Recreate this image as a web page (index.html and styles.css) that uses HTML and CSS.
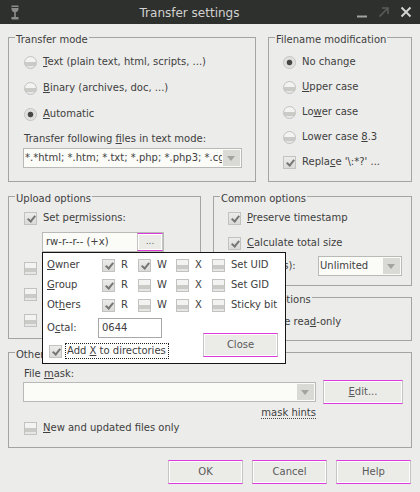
FILE: index.html
```html
<!DOCTYPE html>
<html>
<head>
<meta charset="utf-8">
<title>Transfer settings</title>
<link rel="stylesheet" href="styles.css">
</head>
<body>
<div class="window">
  <header class="titlebar">
    <svg class="app-icon" width="10" height="17" viewBox="0 0 10 17">
      <path d="M1.5 1.5h7v3.5c0 2-1.6 3.3-3.5 3.3S1.5 7 1.5 5z" fill="#8c8c8a"/>
      <path d="M1.5 3.5h7" stroke="#2e302d" stroke-width="1"/>
      <rect x="4.2" y="8" width="1.6" height="5" fill="#8c8c8a"/>
      <rect x="1.5" y="13" width="7" height="2.5" fill="#8c8c8a"/>
    </svg>
    <div class="title">Transfer settings</div>
    <div class="wm">
      <svg width="12" height="12" viewBox="0 0 12 12"><path d="M1 10.5h10" stroke="#a3a3a1" stroke-width="2"/></svg>
      <svg width="12" height="12" viewBox="0 0 12 12"><path d="M1.5 10.5L10 2M4 2h6v6" stroke="#5a5b59" stroke-width="1.6" fill="none"/></svg>
      <svg width="12" height="12" viewBox="0 0 12 12"><path d="M1.5 1.5l9 9M10.5 1.5l-9 9" stroke="#d4d4d2" stroke-width="2"/></svg>
    </div>
  </header>

  <main class="content">
    <div class="row-top">
      <section class="group g-transfer">
        <span class="gtitle">Transfer mode</span>
        <label class="opt mt6"><span class="rb"></span><span><u>T</u>ext (plain text, html, scripts, ...)</span></label>
        <label class="opt mt6"><span class="rb"></span><span><u>B</u>inary (archives, doc, ...)</span></label>
        <label class="opt mt6"><span class="rb on"></span><span><u>A</u>utomatic</span></label>
        <div class="lbl tf-label">Transfer following <u>f</u>iles in text mode:</div>
        <div class="combo tf-combo"><span class="ctext">*.*html; *.htm; *.txt; *.php; *.php3; *.cgi; *.c; *.cpp</span><span class="cbtn"></span></div>
      </section>
      <section class="group g-filename">
        <span class="gtitle">Filename modification</span>
        <label class="opt mt6"><span class="rb on"></span><span>No chan<u>g</u>e</span></label>
        <label class="opt mt5"><span class="rb"></span><span><u>U</u>pper case</span></label>
        <label class="opt mt5"><span class="rb"></span><span>Lo<u>w</u>er case</span></label>
        <label class="opt mt5"><span class="rb"></span><span>Lower case <u>8</u>.3</span></label>
        <label class="opt mt5"><span class="cb on"></span><span>Repla<u>c</u>e '\:*?' ...</span></label>
      </section>
    </div>

    <div class="row-mid">
      <section class="group g-upload">
        <span class="gtitle">Upload options</span>
        <label class="opt mt3"><span class="cb on"></span><span>Set pe<u>r</u>missions:</span></label>
        <div class="perm-edit"><span class="ptext">rw-r--r-- (+x)</span><span class="btn dots">...</span></div>
        <label class="opt mt6"><span class="cb"></span><span>Clear 'Archive' attribute</span></label>
        <label class="opt mt6"><span class="cb"></span><span>Remove BOM and EOF marks</span></label>
        <label class="opt mt6"><span class="cb"></span><span>Encrypt new files</span></label>
      </section>
      <div class="right-col">
        <section class="group g-common">
          <span class="gtitle">Common options</span>
          <label class="opt mt3"><span class="cb on"></span><span><u>P</u>reserve timestamp</span></label>
          <label class="opt mt5"><span class="cb on"></span><span><u>C</u>alculate total size</span></label>
          <div class="speed-row">
            <span class="lbl">Speed (KB/s):</span>
            <div class="combo speed-combo"><span class="ctext">Unlimited</span><span class="cbtn"></span></div>
          </div>
        </section>
        <section class="group g-download">
          <span class="gtitle">Download options</span>
          <label class="opt mt6"><span class="cb"></span><span>Preserve rea<u>d</u>-only</span></label>
        </section>
      </div>
    </div>

    <section class="group g-other">
      <span class="gtitle">Other</span>
      <div class="lbl mask-label">File <u>m</u>ask:</div>
      <div class="mask-row">
        <div class="combo mask-combo"><span class="ctext"></span><span class="cbtn"></span></div>
        <span class="btn edit-btn"><u>E</u>dit...</span>
      </div>
      <div class="hints-row"><span class="hints">mask hints</span></div>
      <label class="opt new-row"><span class="cb"></span><span><u>N</u>ew and updated files only</span></label>
    </section>

    <div class="buttons">
      <span class="btn dlg-btn">OK</span>
      <span class="btn dlg-btn">Cancel</span>
      <span class="btn dlg-btn">Help</span>
    </div>
  </main>

  <div class="popup">
    <div class="perm-grid">
      <span class="plabel"><u>O</u>wner</span>
      <span class="pcell"><span class="cb on"></span>R</span>
      <span class="pcell"><span class="cb on"></span>W</span>
      <span class="pcell"><span class="cb"></span>X</span>
      <span class="pcell"><span class="cb"></span>Set UID</span>

      <span class="plabel"><u>G</u>roup</span>
      <span class="pcell"><span class="cb on"></span>R</span>
      <span class="pcell"><span class="cb"></span>W</span>
      <span class="pcell"><span class="cb"></span>X</span>
      <span class="pcell"><span class="cb"></span>Set GID</span>

      <span class="plabel">Ot<u>h</u>ers</span>
      <span class="pcell"><span class="cb on"></span>R</span>
      <span class="pcell"><span class="cb"></span>W</span>
      <span class="pcell"><span class="cb"></span>X</span>
      <span class="pcell"><span class="cb"></span>Sticky bit</span>
    </div>
    <div class="popup-bottom">
      <div class="pb-left">
        <div class="octal-row"><span class="plabel">O<u>c</u>tal:</span><span class="octal-edit">0644</span></div>
        <label class="addx-row"><span class="cb on"></span><span class="focus">Add <u>X</u> to directories</span></label>
      </div>
      <span class="btn close-btn">Close</span>
    </div>
  </div>
</div>
</body>
</html>
```

FILE: styles.css
```css
* { box-sizing: border-box; }
html, body { margin: 0; padding: 0; }
body {
  width: 420px;
  height: 492px;
  overflow: hidden;
  background: #ececea;
  font-family: "DejaVu Sans", sans-serif;
  font-size: 10px;
  line-height: 12px;
  color: #404040;
}
u { text-decoration: underline; text-underline-offset: 1px; }

.window { position: relative; width: 420px; height: 492px; }

/* title bar */
.titlebar {
  height: 24px;
  background: #2e302d;
  display: flex;
  align-items: center;
}
.app-icon { margin-left: 10px; flex: none; }
.title {
  flex: 1;
  text-align: center;
  font-size: 12px;
  color: #d2d2d0;
  padding-top: 1px;
  padding-left: 3px;
}
.wm { display: flex; align-items: center; gap: 10px; padding-right: 8px; }
.wm svg { display: block; }

/* content */
.content { padding: 13px 8px 0 8px; }

.group {
  border: 1px solid #a4a4a2;
  display: flex;
  flex-direction: column;
  align-items: flex-start;
}
.gtitle {
  margin: -4px 0 0 6px;
  padding: 0 1px;
  background: #ececea;
  height: 12px;
  line-height: 12px;
  white-space: nowrap;
}

.opt {
  display: flex;
  align-items: center;
  gap: 6px;
  height: 20px;
  white-space: nowrap;
}
.mt3 { margin-top: 3px; }
.mt5 { margin-top: 5px; }
.mt6 { margin-top: 6px; }

.lbl { white-space: nowrap; }

/* radio & checkbox */
.rb, .cb {
  flex: none;
  width: 13px;
  height: 13px;
  border: 1px solid #c2c2c0;
  background: linear-gradient(#f3f3f1 0 45%, #cacac7 45% 78%, #e6e6e4 78%);
  position: relative;
}
.rb { border-radius: 50%; }
.rb.on {
  background: radial-gradient(circle at 50% 50%, #474747 0 2.4px, #dcdcda 3.2px, #eeeeec 100%);
}
.cb.on { background: linear-gradient(#ececea, #dadad8); }
.cb.on::after {
  content: "";
  position: absolute;
  left: 4px;
  top: 1px;
  width: 3px;
  height: 6px;
  border-right: 2px solid #767674;
  border-bottom: 2px solid #767674;
  transform: rotate(40deg);
}

/* combos */
.combo {
  display: flex;
  height: 20px;
  border: 1px solid #b9b9b7;
  background: #fbfbf8;
  overflow: hidden;
}
.ctext {
  flex: 1;
  overflow: hidden;
  white-space: nowrap;
  padding: 3px 0 0 1px;
  min-width: 0;
}
.cbtn {
  flex: none;
  width: 17px;
  margin: 1px;
  background: #d9d9d6;
  position: relative;
}
.cbtn::after {
  content: "";
  position: absolute;
  left: 4px;
  top: 6px;
  border-left: 4.5px solid transparent;
  border-right: 4.5px solid transparent;
  border-top: 5px solid #a2a2a0;
}

/* buttons */
.btn {
  display: flex;
  align-items: center;
  justify-content: center;
  background: #ebebe8;
  border: 1px solid #c4c4c2;
  border-top-color: #dd3add;
  border-bottom-color: #dd3add;
  box-shadow: inset 0 0 0 1px #ffffff;
  color: #5a5a5a;
  white-space: nowrap;
}

/* top row */
.row-top {
  display: grid;
  grid-template-columns: 248px 144px;
  column-gap: 12px;
}
.g-transfer { height: 145px; padding-left: 15px; }
.g-transfer .gtitle { margin-left: -9px; }
.tf-label { margin-top: 9px; }
.tf-combo { margin-top: 3px; margin-left: -1px; width: 219px; }
.g-filename { height: 145px; padding-left: 14px; }
.g-filename .gtitle { margin-left: -8px; }

/* middle row */
.row-mid {
  margin-top: 14px;
  display: grid;
  grid-template-columns: 193px 199px;
  column-gap: 12px;
}
.g-upload { height: 143px; padding-left: 15px; }
.g-upload .gtitle { margin-left: -9px; }
.perm-edit {
  margin: 4px 0 0 18px;
  width: 122px;
  height: 20px;
  border: 1px solid #b9b9b7;
  background: #fbfbf8;
  display: flex;
}
.ptext { flex: 1; padding: 3px 0 0 3px; }
.dots { width: 26px; height: 18px; margin: 0; font-size: 9px; padding-bottom: 3px; }

.right-col { display: flex; flex-direction: column; gap: 11px; }
.g-common { height: 90px; padding-left: 14px; align-items: stretch; }
.g-common .gtitle { margin-left: -8px; align-self: flex-start; }
.g-common .opt { align-self: flex-start; }
.speed-row {
  margin-top: 3px;
  display: flex;
  align-items: center;
  height: 20px;
}
.speed-combo { margin-left: auto; margin-right: 9px; width: 84px; }
.g-download { height: 44px; padding-left: 14px; }
.g-download .gtitle { margin-left: -8px; }

/* other */
.g-other { margin-top: 11px; height: 96px; padding-left: 15px; align-items: stretch; }
.g-other .gtitle { margin-left: -9px; align-self: flex-start; }
.mask-label { margin-top: 7px; }
.mask-row { display: flex; align-items: center; height: 24px; margin-left: -1px; }
.mask-combo { width: 293px; }
.edit-btn { margin-left: 7px; width: 80px; height: 24px; }
.hints-row { width: 293px; margin-left: -1px; margin-top: 3px; text-align: right; height: 12px; }
.hints {
  text-decoration: underline dotted #444;
  text-underline-offset: 2px;
}
.new-row { height: 18px; align-self: flex-start; }

/* dialog buttons */
.buttons {
  margin-top: 12px;
  padding-right: 1px;
  display: flex;
  justify-content: flex-end;
  gap: 9px;
}
.dlg-btn { width: 75px; height: 24px; }

/* permissions popup (overlay) */
.popup {
  position: absolute;
  left: 42px;
  top: 252px;
  width: 244px;
  height: 112px;
  background: #ffffff;
  border: 1px solid #151515;
  padding: 2px 7px 0 4px;
}
.perm-grid {
  display: grid;
  grid-template-columns: 55px 36px 38px 36px auto;
  grid-auto-rows: 20px;
  align-items: center;
}
.plabel { white-space: nowrap; }
.pcell { display: flex; align-items: center; gap: 6px; white-space: nowrap; }
.popup-bottom { display: flex; align-items: flex-start; margin-top: 3px; }
.pb-left { display: flex; flex-direction: column; }
.octal-row { display: flex; align-items: center; height: 20px; }
.octal-row .plabel { width: 51px; }
.octal-edit {
  width: 64px;
  height: 20px;
  border: 1px solid #a8a8a6;
  background: #ffffff;
  padding: 3px 0 0 3px;
}
.addx-row {
  display: flex;
  align-items: center;
  gap: 5px;
  height: 16px;
  margin-top: 5px;
  padding-left: 2px;
  white-space: nowrap;
}
.focus { outline: 1px dotted #222; outline-offset: 1px; padding-right: 1px; }
.close-btn { margin-left: auto; margin-top: 15px; width: 75px; height: 24px; }
```
